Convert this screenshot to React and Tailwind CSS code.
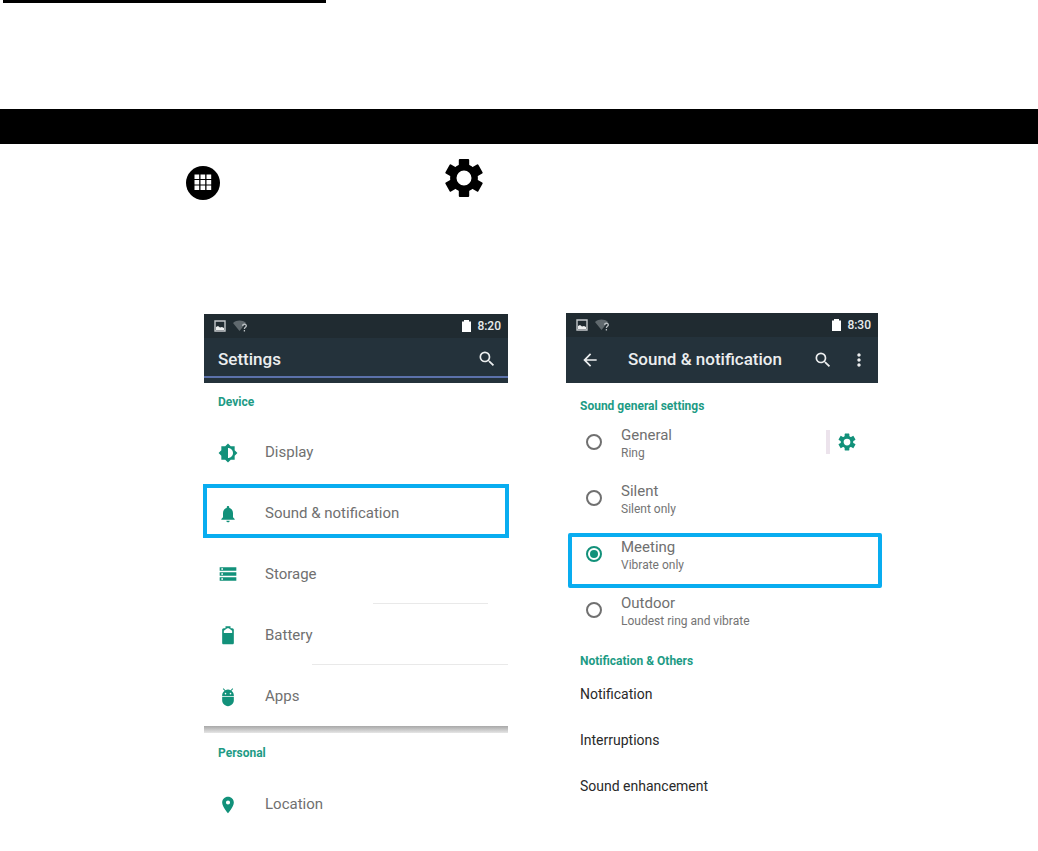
import { useState } from "react";
import {
  MdAdb,
  MdArrowBack,
  MdBrightness6,
  MdLocationOn,
  MdMoreVert,
  MdNotifications,
  MdSearch,
  MdStorage,
} from "react-icons/md";

const GearIcon = ({ className }) => (
  <svg viewBox="0 0 40 40" className={className} fill="none" aria-hidden="true">
    <circle cx="20" cy="20" r="10.7" stroke="currentColor" strokeWidth="6.4" />
    {[0, 60, 120, 180, 240, 300].map((angle) => (
      <path
        key={angle}
        d="M14.8 9V2Q14.8 1 15.8 1H24.2Q25.2 1 25.2 2V9Z"
        fill="currentColor"
        transform={`rotate(${angle} 20 20)`}
      />
    ))}
  </svg>
);

const AppsIcon = ({ className }) => (
  <svg viewBox="0 0 34 34" className={className} aria-hidden="true">
    <circle cx="17" cy="17" r="17" fill="#000" />
    {[8.5, 14, 19.5].map((y) =>
      [8.5, 14.5, 20.5].map((x) => (
        <rect key={`${x}-${y}`} x={x} y={y} width="4.7" height="4.5" fill="#fff" />
      ))
    )}
  </svg>
);

const BatteryIcon = ({ className }) => (
  <svg viewBox="0 0 24 24" className={className} aria-hidden="true">
    <path
      d="M17 4h-2V1.500H9V4H7C5.600 4 5 5 5 6v15.500c0 .8.700 1.500 1.500 1.500h11c.8 0 1.500-.7 1.500-1.500V6c0-1-.6-2-2-2ZM17 9.500H7V7l4-3h2l4 3Z"
      fill="currentColor"
    />
  </svg>
);

const StatusBar = ({ time }) => (
  <div className="flex h-6 items-center bg-[#202b31] pl-2.5 pr-[7px]">
    <svg viewBox="0 0 12 12" className="h-3 w-3" aria-hidden="true">
      <path d="M1 1h10v10H1Z" fill="none" stroke="#c3c8ca" strokeWidth="1.4" />
      <path d="M2 10V7l2-1 2 1.500L8 7l2 1v2Z" fill="#eef0f0" />
    </svg>
    <svg viewBox="0 0 16 12" className="ml-[7px] h-3 w-4" aria-hidden="true">
      <path d="M0 3C4-.2 9-.2 13 3L6.500 11Z" fill="#60696e" />
      <path d="M9.500 5.800c.3-2.200 4-2 3.800.1-.1 1.400-1.900 1.300-1.900 3M11.400 10v1.400" fill="none" stroke="#b9bfc2" strokeWidth="1.300" />
    </svg>
    <svg viewBox="0 0 9 12" className="ml-auto h-3 w-[9px]" aria-hidden="true">
      <path d="M0 1.500h2V0h5v1.500h2V12H0Z" fill="#fff" />
    </svg>
    <span className="ml-1.5 text-xs font-medium text-[#e8ebec]">{time}</span>
  </div>
);

const SectionTitle = ({ children }) => (
  <h2 className="text-xs leading-4 font-bold text-[#1d9b85]">{children}</h2>
);

const deviceItems = [
  { label: "Display", Icon: MdBrightness6 },
  { label: "Sound & notification", Icon: MdNotifications, marked: true },
  { label: "Storage", Icon: MdStorage, line: "ml-[169px] mr-5" },
  { label: "Battery", Icon: BatteryIcon, line: "ml-[108px]" },
  { label: "Apps", Icon: MdAdb },
];

const soundModes = [
  { name: "General", detail: "Ring", hasSettings: true },
  { name: "Silent", detail: "Silent only" },
  { name: "Meeting", detail: "Vibrate only", marked: true },
  { name: "Outdoor", detail: "Loudest ring and vibrate" },
];

const otherItems = ["Notification", "Interruptions", "Sound enhancement"];

const SettingsRow = ({ label, Icon, marked, line }) => (
  <li className="relative flex h-[61px] flex-col">
    <a href="#" className="flex flex-1 items-center pt-0.5 pl-3.5 text-[15px] text-[#707070]">
      <Icon className="h-5 w-5 text-[#12917a]" />
      <span className="ml-[27px]">{label}</span>
    </a>
    {line && <div className={`h-px bg-[#e9e9e9] ${line}`} />}
    {marked && (
      <div className="pointer-events-none absolute -inset-x-px top-0.5 h-[54px] border-4 border-[#09adf0]" />
    )}
  </li>
);

const SettingsScreen = () => (
  <section className="mt-px">
    <header className="bg-[#24323b]">
      <StatusBar time="8:20" />
      <div className="flex h-[38px] items-center justify-between pl-3.5 pr-[11px]">
        <h1 className="pt-1.5 text-[17px] font-medium text-[#eceeef]">Settings</h1>
        <button aria-label="Search" className="pt-1 text-[#eceeef]">
          <MdSearch className="h-5 w-5" />
        </button>
      </div>
      <div className="h-0.5 bg-[#5b71aa]" />
      <div className="h-[5px]" />
    </header>
    <div className="flex h-[38px] items-center pl-3.5">
      <SectionTitle>Device</SectionTitle>
    </div>
    <ul>
      {deviceItems.map((item) => (
        <SettingsRow key={item.label} {...item} />
      ))}
    </ul>
    <div className="h-[7px] bg-linear-to-b from-[#a8a8a8] to-[#e6e6e6]" />
    <div className="flex h-10 items-center pl-3.5">
      <SectionTitle>Personal</SectionTitle>
    </div>
    <ul>
      <SettingsRow label="Location" Icon={MdLocationOn} />
    </ul>
  </section>
);

const SoundScreen = () => {
  const [mode, setMode] = useState("Meeting");

  return (
    <section>
      <header className="bg-[#24323b]">
        <StatusBar time="8:30" />
        <div className="flex h-[46px] items-center pl-3.5 pr-[9px] text-[#eceeef]">
          <button aria-label="Back">
            <MdArrowBack className="h-5 w-5" />
          </button>
          <h1 className="ml-7 text-[17px] font-medium">Sound & notification</h1>
          <button aria-label="Search" className="ml-auto">
            <MdSearch className="h-5 w-5" />
          </button>
          <button aria-label="More options" className="ml-4">
            <MdMoreVert className="h-5 w-5" />
          </button>
        </div>
      </header>
      <div className="pt-[15px] pl-3.5">
        <SectionTitle>Sound general settings</SectionTitle>
      </div>
      {soundModes.map(({ name, detail, hasSettings, marked }) => (
        <div key={name} className="relative flex h-14 items-center pl-5 pr-[22px]">
          <label className="flex flex-1 items-center">
            <input
              type="radio"
              name="sound-mode"
              checked={mode === name}
              onChange={() => setMode(name)}
              className="h-4 w-4 appearance-none rounded-full border-2 border-[#707070] checked:border-[#12917a] checked:bg-[#12917a] checked:bg-clip-content checked:p-0.5"
            />
            <span className="ml-[19px] flex flex-col pt-1">
              <span className="text-[15px] leading-[18px] text-[#707070]">{name}</span>
              <span className="text-xs leading-[18px] text-[#747474]">{detail}</span>
            </span>
          </label>
          {hasSettings && (
            <>
              <div className="h-6 w-1 bg-[#ece3ec]" />
              <button aria-label="General settings" className="ml-2 text-[#12917a]">
                <GearIcon className="h-[18px] w-[18px]" />
              </button>
            </>
          )}
          {marked && (
            <div className="pointer-events-none absolute top-[7px] -right-1 left-0.5 h-[55px] rounded-xs border-4 border-[#09adf0]" />
          )}
        </div>
      ))}
      <div className="pt-[15px] pb-0.5 pl-3.5">
        <SectionTitle>Notification & Others</SectionTitle>
      </div>
      <ul>
        {otherItems.map((item) => (
          <li key={item}>
            <a href="#" className="flex h-[46px] items-center pl-3.5 text-sm text-[#292929]">
              {item}
            </a>
          </li>
        ))}
      </ul>
    </section>
  );
};

const App = () => (
  <main className="min-h-screen bg-white font-['Roboto',sans-serif]">
    <div className="ml-[3px] h-[3px] w-[323px] bg-black" />
    <div className="mt-[106px] h-[35px] bg-black" />
    <div className="flex h-[169px] items-start gap-[224px] pt-3.5 pl-[186px]">
      <AppsIcon className="mt-2 h-[34px] w-[34px]" />
      <GearIcon className="h-10 w-10" />
    </div>
    <div className="grid grid-cols-[304fr_312fr] gap-[58px] pr-[160px] pl-[204px]">
      <SettingsScreen />
      <SoundScreen />
    </div>
  </main>
);

export default App;
